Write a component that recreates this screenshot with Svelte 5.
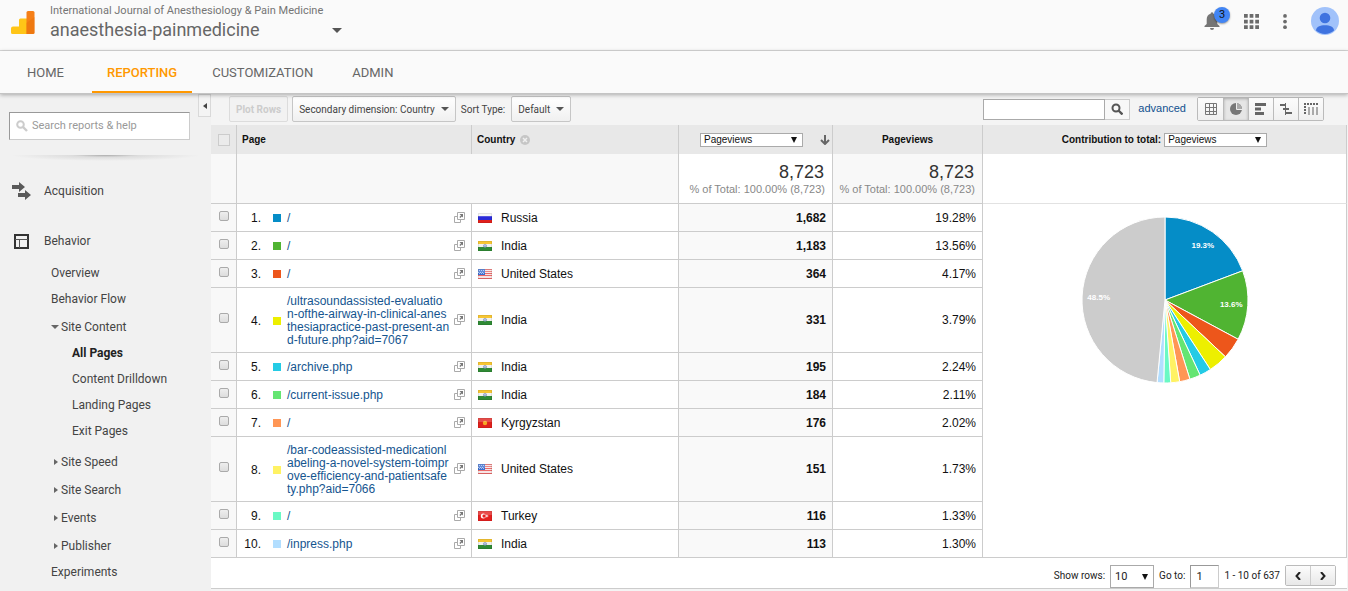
<script lang="ts">
  type Row = {
    page: string;
    country: string;
    flag: string;
    views: string;
    share: number;
    color: string;
  };

  // long paths carry their own line breaks
  const rows: Row[] = [
    { page: '/', country: 'Russia', flag: 'ru', views: '1,682', share: 19.28, color: '#058dc7' },
    { page: '/', country: 'India', flag: 'in', views: '1,183', share: 13.56, color: '#50b432' },
    { page: '/', country: 'United States', flag: 'us', views: '364', share: 4.17, color: '#ed561b' },
    {
      page: '/ultrasoundassisted-evaluatio\nn-ofthe-airway-in-clinical-anes\nthesiapractice-past-present-an\nd-future.php?aid=7067',
      country: 'India',
      flag: 'in',
      views: '331',
      share: 3.79,
      color: '#edef00'
    },
    { page: '/archive.php', country: 'India', flag: 'in', views: '195', share: 2.24, color: '#24cbe5' },
    { page: '/current-issue.php', country: 'India', flag: 'in', views: '184', share: 2.11, color: '#64e572' },
    { page: '/', country: 'Kyrgyzstan', flag: 'kg', views: '176', share: 2.02, color: '#ff9655' },
    {
      page: '/bar-codeassisted-medicationl\nabeling-a-novel-system-toimpr\nove-efficiency-and-patientsafe\nty.php?aid=7066',
      country: 'United States',
      flag: 'us',
      views: '151',
      share: 1.73,
      color: '#fff263'
    },
    { page: '/', country: 'Turkey', flag: 'tr', views: '116', share: 1.33, color: '#6af9c4' },
    { page: '/inpress.php', country: 'India', flag: 'in', views: '113', share: 1.3, color: '#b2deff' }
  ];

  const tabs = ['HOME', 'REPORTING', 'CUSTOMIZATION', 'ADMIN'];
  const contentPages = ['All Pages', 'Content Drilldown', 'Landing Pages', 'Exit Pages'];
  const groups = ['Site Speed', 'Site Search', 'Events', 'Publisher'];

  let activeTab = $state('REPORTING');
  let activePage = $state('All Pages');
  let view = $state('pie');

  // pie slices, the rest of the traffic goes into one grey slice
  const R = 83;
  const other = 100 - rows.reduce((sum, r) => sum + r.share, 0);

  function point(percent: number, radius: number) {
    const a = (percent / 100) * Math.PI * 2;
    return { x: Math.sin(a) * radius, y: -Math.cos(a) * radius };
  }

  const slices = $derived.by(() => {
    let start = 0;
    return [...rows, { share: other, color: '#cccccc' }].map(({ share, color }) => {
      const a = point(start, R);
      const b = point(start + share, R);
      const label = point(start + share / 2, R * 0.8);
      start += share;
      return {
        color,
        share,
        label,
        d: `M0 0L${a.x} ${a.y}A${R} ${R} 0 0 1 ${b.x} ${b.y}Z`
      };
    });
  });
</script>

{#snippet flagIcon(code: string)}
  <svg class="flag" viewBox="0 0 14 10" width="14" height="10" aria-hidden="true">
    {#if code === 'ru'}
      <path fill="#f4f4f4" d="M0 0h14v4H0z" />
      <path fill="#2a2ad8" d="M0 3h14v4H0z" />
      <path fill="#e0201c" d="M0 7h14v3H0z" />
    {:else if code === 'in'}
      <path fill="#f5b800" d="M0 0h14v3H0z" />
      <path fill="#f1f1ec" d="M0 3h14v3H0z" />
      <path fill="#2f8a35" d="M0 6h14v4H0z" />
      <circle cx="7" cy="4.8" r="1.5" fill="#b8c4dc" stroke="#7387b5" stroke-width=".7" />
    {:else if code === 'us'}
      <path fill="#f7e4e4" d="M0 0h14v10H0z" />
      <path stroke="#ea6a6a" d="M0 .5h14M0 2.5h14M0 4.5h14M0 6.5h14M0 9.5h14" />
      <path fill="#3c6fd0" d="M0 0h7v6H0z" />
      <path stroke="#a9c2f0" stroke-dasharray="1 1" d="M1 1.5h6M0 3.5h6M1 4.5h6" />
    {:else if code === 'kg'}
      <path fill="#e0201c" d="M0 0h14v10H0z" />
      <circle cx="7" cy="5" r="2.2" fill="#f5a623" />
    {:else}
      <path fill="#e5201f" d="M0 0h14v10H0z" />
      <circle cx="5.3" cy="5" r="2.5" fill="#fff" />
      <circle cx="6.1" cy="5" r="1.7" fill="#e5201f" />
      <path fill="#fff" d="M7 5l1.3-.5L9 3.3l.4 1.2 1.5.5-1.5.5L9 6.7l-.7-1.2z" />
    {/if}
    <path fill="#fff" opacity=".2" d="M0 0h14v4H0z" />
    <path fill="none" stroke="#000" opacity=".08" d="M.5.5h13v9H.5z" />
  </svg>
{/snippet}

<div class="app">
  <header>
    <svg class="logo" viewBox="0 0 24 24" width="24" height="24" aria-hidden="true">
      <path fill="#ffc517" d="M2 15.5h6V9q0-1.500 1.500-1.500H16V23H1.500Q0 23 0 21.500v-4Q0 15.500 2 15.500z" />
      <path fill="#f57f17" d="M15.500 1.500Q15.500 0 17 0h5q1.500 0 1.500 1.500v20Q23.500 23 22 23h-6.500z" />
      <path fill="#e8710a" d="M15.500 12l8-6v15.500Q23.500 23 22 23h-6.500z" opacity=".5" />
    </svg>
    <div class="account">
      <span class="account-name">International Journal of Anesthesiology &amp; Pain Medicine</span>
      <button class="property">
        anaesthesia-painmedicine
        <span class="caret big"></span>
      </button>
    </div>
    <div class="actions">
      <button class="bell" aria-label="Notifications">
        <svg viewBox="0 0 16 20" width="16" height="20">
          <path
            fill="#757575"
            d="M8 1.200a1.400 1.400 0 0 1 1.400 1.500C12 3.400 13.300 5.600 13.300 8.300v4.700L15.500 15v1H.5v-1l2.200-2V8.300C2.700 5.600 4 3.400 6.600 2.700A1.400 1.400 0 0 1 8 1.200zM6 17h4a2 2 0 0 1-4 0z"
          />
        </svg>
        <span class="badge">3</span>
      </button>
      <button aria-label="Apps">
        <svg viewBox="0 0 16 16" width="15" height="15">
          <path stroke="#6b6b6b" stroke-width="4" stroke-dasharray="4 2" d="M0 2h16M0 8h16M0 14h16" />
        </svg>
      </button>
      <button aria-label="More">
        <svg viewBox="0 0 4 16" width="4" height="15">
          <g fill="#6b6b6b"><circle cx="2" cy="2" r="2" /><circle cx="2" cy="8" r="2" /><circle cx="2" cy="14" r="2" /></g>
        </svg>
      </button>
      <button aria-label="Account">
        <svg viewBox="0 0 28 28" width="28" height="28">
          <circle cx="14" cy="14" r="14" fill="#a1c2fa" />
          <circle cx="14" cy="11" r="5.300" fill="#3f73e0" />
          <path fill="#3f73e0" d="M5 23.500c0-3.500 4-5.300 9-5.300s9 1.800 9 5.300a13.500 13.500 0 0 1-18 0z" />
        </svg>
      </button>
    </div>
  </header>

  <nav class="tabs">
    {#each tabs as tab}
      <a href="#{tab.toLowerCase()}" class:active={tab === activeTab} onclick={() => (activeTab = tab)}>{tab}</a>
    {/each}
  </nav>

  <div class="body">
    <aside>
      <button class="collapse" aria-label="Collapse navigation"></button>
      <label class="search">
        <svg viewBox="0 0 12 12" width="12" height="12" aria-hidden="true">
          <circle cx="4.500" cy="4.500" r="3.300" fill="none" stroke="#ccc" stroke-width="2" />
          <path stroke="#ccc" stroke-width="2.400" d="M7 7l4 4" />
        </svg>
        <input type="text" placeholder="Search reports & help" aria-label="Search reports and help" />
      </label>
      <div class="divider"></div>

      <a class="section" href="#acquisition">
        <svg viewBox="0 0 19 20" width="19" height="20" aria-hidden="true">
          <path fill="#5a5a5a" d="M0 4h7V1l6 5-6 5V8H0zM6 12h7V9l6 5-6 5v-3H6z" />
        </svg>
        Acquisition
      </a>
      <a class="section" href="#behavior">
        <svg viewBox="0 0 19 20" width="19" height="20" aria-hidden="true">
          <path fill="none" stroke="#333" stroke-width="2" d="M3 4h13v13H3z" />
          <path stroke="#555" d="M3 8.500h13M7.500 8.500V17" />
        </svg>
        Behavior
      </a>
      <ul class="menu">
        <li><a href="#overview">Overview</a></li>
        <li><a href="#flow">Behavior Flow</a></li>
        <li class="group open">
          <a href="#content">Site Content</a>
          <ul>
            {#each contentPages as name}
              <li>
                <a href="#report" class:current={name === activePage} onclick={() => (activePage = name)}>{name}</a>
              </li>
            {/each}
          </ul>
        </li>
        {#each groups as name}
          <li class="group"><a href="#group">{name}</a></li>
        {/each}
        <li><a href="#experiments">Experiments</a></li>
      </ul>
    </aside>

    <main>
      <div class="toolbar">
        <button class="btn" disabled>Plot Rows</button>
        <button class="btn">Secondary dimension: Country <span class="caret"></span></button>
        <span class="sort">Sort Type:</span>
        <button class="btn">Default <span class="caret"></span></button>
        <form class="filter" onsubmit={(e) => e.preventDefault()}>
          <input type="text" aria-label="Filter rows" />
          <button aria-label="Search">
            <svg viewBox="0 0 12 12" width="12" height="12">
              <circle cx="5" cy="5" r="3.500" fill="none" stroke="#555" stroke-width="2" />
              <path stroke="#555" stroke-width="2.400" d="M7.500 7.500l4 4" />
            </svg>
          </button>
        </form>
        <a class="advanced" href="#advanced">advanced</a>
        <div class="views">
          <button class:on={view === 'table'} aria-label="Data table" onclick={() => (view = 'table')}>
            <svg viewBox="0 0 14 14" width="14" height="14">
              <path fill="none" stroke="#777" d="M1.500 1.500h11v11h-11zM5.500 1v12M9.500 1v12M1 5.500h12M1 9.500h12" />
            </svg>
          </button>
          <button class:on={view === 'pie'} aria-label="Percentage" onclick={() => (view = 'pie')}>
            <svg viewBox="0 0 14 14" width="14" height="14">
              <circle cx="7" cy="7" r="6" fill="#777" />
              <path fill="#aaa" d="M7 7V1a6 6 0 0 1 6 6z" />
              <path fill="none" stroke="#eee" d="M7.500 1v6.500H13" />
            </svg>
          </button>
          <button class:on={view === 'bars'} aria-label="Performance" onclick={() => (view = 'bars')}>
            <svg viewBox="0 0 14 14" width="14" height="14">
              <path stroke="#666" stroke-width="3" d="M1 2.500h11M1 7h6M1 11.500h9" />
            </svg>
          </button>
          <button class:on={view === 'compare'} aria-label="Comparison" onclick={() => (view = 'compare')}>
            <svg viewBox="0 0 14 14" width="14" height="14">
              <path fill="none" stroke="#666" stroke-width="2" d="M1 3h6M4 7h6M7 11h6" />
              <path stroke="#666" d="M6.500 1v12" />
            </svg>
          </button>
          <button class:on={view === 'pivot'} aria-label="Pivot" onclick={() => (view = 'pivot')}>
            <svg viewBox="0 0 14 14" width="14" height="14">
              <path stroke="#666" stroke-width="2" stroke-dasharray="2 1" d="M0 2h14M1 4v9" />
              <path stroke="#aaa" stroke-width="2" d="M5 5v8M9 5v8M13 5v8" />
            </svg>
          </button>
        </div>
      </div>

      <table>
        <colgroup>
          <col class="c-check" />
          <col class="c-page" />
          <col class="c-country" />
          <col class="c-views" />
          <col class="c-share" />
          <col />
        </colgroup>
        <thead>
          <tr>
            <th class="check"><input type="checkbox" class="all" aria-label="Select all rows" /></th>
            <th>Page</th>
            <th>
              <span class="with-icon">
                Country
                <svg viewBox="0 0 10 10" width="10" height="10" aria-hidden="true">
                  <circle cx="5" cy="5" r="5" fill="#c6c6c6" />
                  <path stroke="#f0f0f0" stroke-width="1.500" d="M3 3l4 4M7 3L3 7" />
                </svg>
              </span>
            </th>
            <th>
              <span class="metric">
                <span class="select">
                  <select aria-label="Metric"><option>Pageviews</option></select>
                </span>
                <svg viewBox="0 0 10 10" width="10" height="10" aria-hidden="true">
                  <path fill="none" stroke="#666" stroke-width="2" d="M5 0v8M1 5l4 4 4-4" />
                </svg>
              </span>
            </th>
            <th class="center">Pageviews</th>
            <th class="center">
              <span class="contribution">
                <label for="contribution">Contribution to total:</label>
                <span class="select">
                  <select id="contribution"><option>Pageviews</option></select>
                </span>
              </span>
            </th>
          </tr>
        </thead>
        <tbody>
          <tr class="totals">
            <td class="check"></td>
            <td class="wide" colspan="2"></td>
            <td class="sorted"><strong>8,723</strong><small>% of Total: 100.00% (8,723)</small></td>
            <td><strong>8,723</strong><small>% of Total: 100.00% (8,723)</small></td>
            <td class="blank"></td>
          </tr>
          {#each rows as row, i}
            <tr>
              <td class="check"><input type="checkbox" aria-label="Select row {i + 1}" /></td>
              <td>
                <div class="page">
                  <span class="index">{i + 1}.</span>
                  <span class="swatch" style="background: {row.color}"></span>
                  <a href="#page">{row.page}</a>
                  <svg viewBox="0 0 11 11" width="11" height="11" aria-hidden="true">
                    <path fill="none" stroke="#aaa" d="M3 4.500H.5v6h6V8" />
                    <path fill="#fff" stroke="#aaa" d="M3.500.5h7v7h-7z" />
                    <path fill="#777" d="M5.500 2H9v3.500L7.900 4.400 6.300 6l-.9-.9L7 3.500z" />
                  </svg>
                </div>
              </td>
              <td><span class="country">{@render flagIcon(row.flag)}{row.country}</span></td>
              <td class="num sorted">{row.views}</td>
              <td class="num">{row.share.toFixed(2)}%</td>
              {#if i === 0}
                <td class="chart" rowspan={rows.length}>
                  <svg viewBox="-84 -84 168 168" width="168" height="168" role="img" aria-label="Contribution to total pageviews">
                    {#each slices as slice}
                      <path d={slice.d} fill={slice.color} stroke="#fff" />
                    {/each}
                    {#each slices.filter((s) => s.share > 5) as slice}
                      <text x={slice.label.x} y={slice.label.y + 3}>{slice.share.toFixed(1)}%</text>
                    {/each}
                  </svg>
                </td>
              {/if}
            </tr>
          {/each}
        </tbody>
      </table>

      <div class="pager">
        <label for="page-size">Show rows:</label>
        <span class="select">
          <select id="page-size"><option>10</option></select>
        </span>
        <label for="go-to">Go to:</label>
        <input id="go-to" type="text" value="1" />
        <span>1 - 10 of 637</span>
        <div class="steps">
          <button aria-label="Previous page">
            <svg viewBox="0 0 6 8" width="6" height="8"><path d="M5 0L1.500 4 5 8" /></svg>
          </button>
          <button aria-label="Next page">
            <svg viewBox="0 0 6 8" width="6" height="8"><path d="M1 0l3.500 4L1 8" /></svg>
          </button>
        </div>
      </div>
    </main>
  </div>
</div>

<style>
  :global(body) {
    margin: 0;
  }

  .app {
    display: flex;
    flex-direction: column;
    min-height: 100vh;
    font-family: Roboto, sans-serif;
    font-size: 12px;
    color: #222;
    background: #f4f4f4;
  }

  button,
  input,
  select {
    box-sizing: border-box;
    margin: 0;
    font-family: inherit;
    font-size: inherit;
    color: inherit;
  }

  button {
    padding: 0;
    border: none;
    background: none;
    cursor: pointer;
  }

  a {
    color: inherit;
    text-decoration: none;
  }

  svg {
    display: block;
    flex: none;
  }

  ul {
    margin: 0;
    padding: 0;
    list-style: none;
  }

  .caret {
    border: 4px solid transparent;
    border-top-color: #555;
    border-bottom: none;
  }

  .caret.big {
    border-width: 5px;
    border-bottom: none;
  }

  /* top bar */

  header {
    display: flex;
    align-items: flex-start;
    height: 50px;
    padding-left: 11px;
    background: #fafafa;
    border-bottom: 1px solid #d9d9d9;
  }

  .logo {
    margin-top: 11px;
  }

  .account {
    display: flex;
    flex-direction: column;
    width: 292px;
    padding: 4px 0 0 15px;
    color: #757575;
  }

  .account-name {
    font-size: 11px;
    line-height: 14px;
    white-space: nowrap;
  }

  .property {
    display: flex;
    align-items: center;
    justify-content: space-between;
    font-size: 18px;
    line-height: 24px;
    color: #666;
  }

  .actions {
    display: flex;
    align-items: center;
    gap: 24px;
    margin-left: auto;
    padding: 7px 9px 0 0;
  }

  .bell {
    position: relative;
    margin-right: -8px;
    padding-right: 8px;
  }

  .badge {
    position: absolute;
    top: -4px;
    left: 10px;
    width: 16px;
    height: 16px;
    border-radius: 50%;
    background: #4285f4;
    box-shadow: 0 1px 2px rgba(0, 0, 0, 0.4);
    font-size: 11px;
    line-height: 16px;
    color: #111;
  }

  .tabs {
    position: relative;
    z-index: 1;
    display: flex;
    gap: 9px;
    height: 42px;
    padding-left: 12px;
    background: #fafafa;
    border-bottom: 1px solid #c4c4c4;
    box-shadow: 0 1px 4px rgba(0, 0, 0, 0.3);
  }

  .tabs a {
    padding: 0 15px;
    border-bottom: 2px solid transparent;
    font-size: 13px;
    line-height: 44px;
    height: 40px;
    color: #666;
  }

  .tabs .active {
    margin: 0 -4px 0 4px;
    border-color: #ff9800;
    font-weight: 500;
    color: #ff9800;
  }

  .body {
    display: flex;
    flex: 1;
  }

  /* side navigation */

  aside {
    position: relative;
    flex: none;
    width: 211px;
    box-sizing: border-box;
    padding-top: 18px;
    background: #f1f1f1;
    color: #444;
  }

  .collapse {
    position: absolute;
    top: 0;
    right: 0;
    width: 13px;
    height: 23px;
    border: 1px solid #d9d9d9;
    background: #f4f4f4;
  }

  .collapse::before {
    content: '';
    display: block;
    width: 0;
    margin: auto;
    border: 3px solid transparent;
    border-right: 4px solid #444;
    border-left: none;
  }

  .search {
    display: flex;
    align-items: center;
    gap: 4px;
    width: 181px;
    height: 28px;
    box-sizing: border-box;
    margin-left: 9px;
    padding-left: 6px;
    background: #fff;
    border: 1px solid #ccc;
    border-top-color: #999;
    border-left-color: #999;
  }

  .search input {
    flex: 1;
    min-width: 0;
    padding: 0 0 1px;
    border: none;
    outline: none;
    background: none;
    font-size: 11px;
  }

  .search input::placeholder {
    color: #999;
  }

  .divider {
    height: 6px;
    margin: 15px 10px 5px;
    background: radial-gradient(ellipse at top, #aaa, #ddd 25%, transparent 70%);
  }

  .section {
    display: flex;
    align-items: center;
    gap: 13px;
    height: 50px;
    margin-left: 12px;
  }

  .section + .menu {
    margin-top: -6px;
  }

  .menu a {
    display: block;
    padding-left: 51px;
    line-height: 26px;
  }

  .group {
    padding-top: 2px;
  }

  .group > a {
    display: flex;
    align-items: center;
    gap: 3px;
    padding-left: 54px;
  }

  .group > a::before {
    content: '';
    border: 3px solid transparent;
    border-left: 4px solid #666;
    border-right: none;
  }

  .open > a {
    gap: 2px;
    padding-left: 51px;
  }

  .open > a::before {
    border: 4px solid transparent;
    border-top-color: #666;
    border-bottom: none;
  }

  .group ul {
    padding-bottom: 3px;
  }

  .group ul a {
    padding-left: 72px;
  }

  .group ul .current {
    font-weight: bold;
    color: #222;
  }

  /* report */

  main {
    flex: 1;
    min-width: 0;
    padding-right: 1px;
  }

  .toolbar {
    display: flex;
    align-items: center;
    box-sizing: border-box;
    height: 31px;
    padding: 0 23px 1px 18px;
    font-size: 10px;
    color: #444;
  }

  .btn {
    display: flex;
    align-items: center;
    gap: 6px;
    height: 26px;
    margin-right: 4px;
    padding: 0 6px;
    border: 1px solid #c6c6c6;
    border-radius: 2px;
    background: linear-gradient(#fff, #f0f0f0);
  }

  .btn:disabled {
    border-color: #dcdcdc;
    background: #f2f2f2;
    font-weight: bold;
    color: #ccc;
  }

  .sort {
    margin: 0 6px 0 1px;
  }

  .filter {
    display: flex;
    margin-left: auto;
  }

  .filter input {
    width: 122px;
    height: 21px;
    border: 1px solid #aaa;
    background: #fff;
  }

  .filter button {
    width: 25px;
    height: 21px;
    padding-left: 6px;
    border: 1px solid #ccc;
    border-left: none;
    background: #f8f8f8;
  }

  .advanced {
    margin: 0 11px 0 8px;
    padding-bottom: 3px;
    font-family: 'Liberation Sans', Arial, sans-serif;
    font-size: 11px;
    color: #11508f;
  }

  .views {
    display: flex;
    border: 1px solid #bbb;
    border-radius: 2px;
  }

  .views button {
    display: grid;
    place-items: center;
    width: 25px;
    height: 22px;
    background: linear-gradient(#fcfcfc, #f0f0f0);
  }

  .views button + button {
    border-left: 1px solid #bbb;
  }

  .views .on {
    background: #e6e6e6;
    box-shadow: inset 0 1px 3px rgba(0, 0, 0, 0.25);
  }

  table {
    width: 100%;
    table-layout: fixed;
    border-collapse: separate;
    border-spacing: 0;
    background: #fff;
    font-family: 'Liberation Sans', Arial, sans-serif;
    color: #111;
  }

  .c-check {
    width: 26px;
  }

  .c-page {
    width: 235px;
  }

  .c-country {
    width: 207px;
  }

  .c-views {
    width: 154px;
  }

  .c-share {
    width: 150px;
  }

  th,
  td {
    height: 27px;
    padding: 0;
    border-right: 1px solid #ccc;
    border-bottom: 1px solid #ccc;
  }

  th {
    height: 29px;
    padding-left: 5px;
    border-bottom: none;
    background: #e8e8e8;
    font-size: 10px;
    text-align: left;
  }

  .check {
    padding: 0;
    background: #f8f8f8;
    text-align: center;
  }

  th.check {
    background: #e8e8e8;
  }

  .center {
    padding: 0;
    text-align: center;
  }

  .check input {
    appearance: none;
    display: block;
    width: 10px;
    height: 10px;
    margin: 0 auto 4px;
    border: 1px solid #aaa;
    border-radius: 2px;
    background: linear-gradient(#eee, #ddd);
  }

  .check .all {
    width: 12px;
    height: 12px;
    margin: 0 auto;
    border-color: #ccc;
    border-radius: 0;
    background: #ebebeb;
  }

  .with-icon,
  .metric,
  .contribution,
  .country {
    display: flex;
    align-items: center;
  }

  .with-icon {
    gap: 5px;
  }

  .metric {
    justify-content: flex-end;
    gap: 17px;
    padding-right: 2px;
  }

  .contribution {
    justify-content: center;
    gap: 3px;
  }

  .select {
    position: relative;
    display: inline-block;
  }

  .select::after {
    content: '';
    position: absolute;
    top: 50%;
    right: 6px;
    margin-top: -3px;
    border: 3px solid transparent;
    border-top: 6px solid #111;
    border-bottom: none;
    pointer-events: none;
  }

  .select select {
    appearance: none;
    display: block;
    width: 103px;
    height: 14px;
    padding: 0 3px;
    border: 1px solid #aaa;
    border-radius: 0;
    background: #fff;
    font-size: 10px;
  }

  .totals td {
    height: 49px;
    padding-right: 7px;
    background: #f8f8f8;
    text-align: right;
  }

  .totals .check {
    padding: 0;
  }

  .totals .sorted,
  .totals .blank {
    background: #fff;
  }

  .totals .blank {
    border-bottom-color: #e2e2e2;
  }

  .totals strong,
  .totals small {
    display: block;
  }

  .totals strong {
    padding-right: 1px;
    font-size: 18px;
    font-weight: normal;
    line-height: 20px;
    color: #333;
  }

  .totals small {
    font-size: 11px;
    line-height: 14px;
    color: #888;
  }

  .page {
    display: flex;
    align-items: center;
    padding: 6px 6px 5px 0;
  }

  .page svg {
    margin-bottom: 2px;
  }

  .index {
    width: 24px;
    text-align: right;
  }

  .swatch {
    flex: none;
    width: 8px;
    height: 8px;
    margin: 0 6px 0 12px;
  }

  .page a {
    flex: 1;
    min-width: 0;
    padding-top: 1px;
    line-height: 13px;
    white-space: pre;
    color: #15558f;
  }

  .country {
    padding-left: 6px;
  }

  .flag {
    margin-right: 9px;
  }

  .num {
    padding-right: 6px;
    text-align: right;
  }

  .num.sorted {
    background: #f9f9f9;
    font-weight: bold;
  }

  .chart {
    padding-top: 12px;
    vertical-align: top;
  }

  .chart svg {
    margin: 0 auto;
  }

  .chart text {
    fill: #fff;
    font-size: 8px;
    font-weight: bold;
    text-anchor: middle;
  }

  .pager {
    display: flex;
    justify-content: flex-end;
    gap: 5px;
    padding: 7px 11px 0 0;
    background: #fff;
    border-bottom: 1px solid #ccc;
    font-size: 10px;
    line-height: 21px;
  }

  .pager .select select {
    width: 44px;
    height: 23px;
    padding: 0 4px;
    font-size: 11px;
  }

  .pager input {
    width: 29px;
    height: 23px;
    padding: 0 5px;
    border: 1px solid #ccc;
    border-top-color: #999;
    border-left-color: #999;
    font-size: 11px;
  }

  .steps {
    display: flex;
    height: 21px;
    box-sizing: border-box;
    border: 1px solid #bbb;
    border-radius: 2px;
  }

  .steps button {
    display: grid;
    place-items: center;
    width: 24px;
    background: linear-gradient(#fcfcfc, #e8e8e8);
  }

  .steps button + button {
    width: 25px;
    border-left: 1px solid #ccc;
  }

  .steps path {
    fill: none;
    stroke: #222;
    stroke-width: 2;
  }
</style>
